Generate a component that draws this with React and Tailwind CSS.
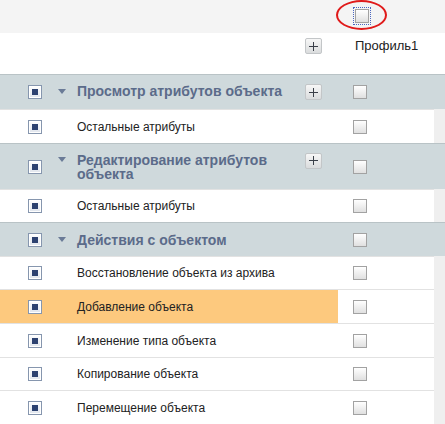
import React from "react";

const FONT = { fontFamily: '"Liberation Sans", Arial, sans-serif' };

function LeftBox() {
  return (
    <div className="w-[14px] h-[14px] border border-[#8696ae] bg-linear-to-b from-[#ffffff] to-[#dfe4ec] flex items-center justify-center shadow-[inset_0_0_0_1px_#ffffff]">
      <div className="w-[6px] h-[6px] bg-[#2c4170]" />
    </div>
  );
}

function Box({ focus }) {
  return (
    <div
      className={`w-[14px] h-[14px] border border-[#a2a2a2] bg-linear-to-b from-[#ffffff] to-[#e0e0e0] ${
        focus ? "outline-1 outline-dotted outline-[#4a66c0] outline-offset-[1px]" : ""
      }`}
    />
  );
}

function PlusBtn() {
  return (
    <div className="w-[17px] h-[16px] shrink-0 rounded-[2px] border border-[#c3c6c8] bg-linear-to-b from-[#f7f7f7] to-[#dadcdd] flex items-center justify-center">
      <svg width="9" height="9" viewBox="0 0 9 9">
        <rect x="4" y="0" width="1" height="9" fill="#3a3f48" />
        <rect x="0" y="4" width="9" height="1" fill="#3a3f48" />
      </svg>
    </div>
  );
}

function Triangle() {
  return (
    <div className="w-[19px] h-[14px] shrink-0 flex items-center">
      <svg width="8" height="5" viewBox="0 0 8 5">
        <polygon points="0,0 8,0 4,5" fill="#6b7b97" />
      </svg>
    </div>
  );
}

function GroupRow({ h, title, plus }) {
  return (
    <div className={`flex ${h} bg-[#cfd9dc] border-t border-[#b9c3c6]`}>
      <div className="w-[58px] shrink-0 flex items-center pl-[28px]">
        <LeftBox />
      </div>
      <div className="flex-1 flex items-center pr-[16px]">
        <div className="flex items-start w-full">
          <Triangle />
          <div className="flex-1 text-[14px] font-bold leading-[14px] text-[#5b6b8a] pr-[4px]">
            {title}
          </div>
          {plus && <PlusBtn />}
        </div>
      </div>
      <div className="w-[96px] shrink-0 flex items-center pl-[15px]">
        <Box />
      </div>
      <div className="w-[11px] shrink-0" />
    </div>
  );
}

function ItemRow({ h, title, highlight }) {
  return (
    <div className={`flex ${h}`}>
      <div className="flex-1 flex border-t border-[#e2e2e2] bg-white">
        <div
          className={`flex-1 flex items-center ${
            highlight ? "bg-[#fdc97e]" : ""
          }`}
        >
          <div className="w-[58px] shrink-0 flex items-center pl-[28px]">
            <LeftBox />
          </div>
          <div className="pl-[19px] text-[12px] text-[#222222]">{title}</div>
        </div>
        <div className="w-[96px] shrink-0 flex items-center pl-[15px]">
          <Box />
        </div>
      </div>
      <div className="w-[11px] shrink-0 bg-[#efefef]" />
    </div>
  );
}

export default function App() {
  return (
    <div className="w-[445px] h-[424px] overflow-hidden bg-white" style={FONT}>
      <div className="flex h-[33px] bg-[#f4f4f4]">
        <div className="w-[338px] shrink-0" />
        <div className="pl-[17px] pt-[9px]">
          <div className="relative">
            <Box focus />
            <div className="absolute left-[-19px] top-[-9px] w-[51px] h-[30px] rounded-[50%] border-2 border-[#e01a1a]" />
          </div>
        </div>
      </div>
      <div className="flex h-[41px] bg-white">
        <div className="flex-1 flex justify-end items-start pt-[5px] pr-[16px]">
          <PlusBtn />
        </div>
        <div className="w-[107px] shrink-0 pl-[17px] pt-[5px] text-[13px] text-[#222222] leading-[16px]">
          Профиль1
        </div>
      </div>
      <GroupRow h="h-[35px]" title="Просмотр атрибутов объекта" plus />
      <ItemRow h="h-[34px]" title="Остальные атрибуты" />
      <GroupRow h="h-[46px]" title="Редактирование атрибутов объекта" plus />
      <ItemRow h="h-[33px]" title="Остальные атрибуты" />
      <GroupRow h="h-[34px]" title="Действия с объектом" />
      <ItemRow h="h-[33px]" title="Восстановление объекта из архива" />
      <ItemRow h="h-[34px]" title="Добавление объекта" highlight />
      <ItemRow h="h-[34px]" title="Изменение типа объекта" />
      <ItemRow h="h-[33px]" title="Копирование объекта" />
      <ItemRow h="h-[34px]" title="Перемещение объекта" />
    </div>
  );
}
